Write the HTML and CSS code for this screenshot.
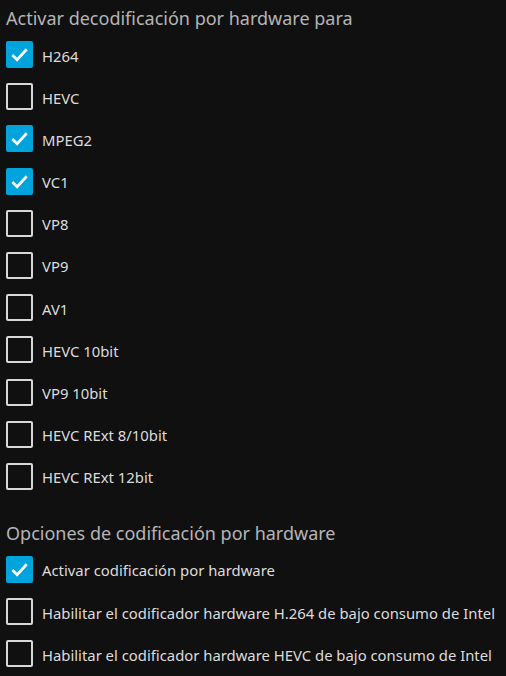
FILE: index.html
```html
<!DOCTYPE html>
<html lang="es">
<head>
    <meta charset="UTF-8">
    <meta name="viewport" content="width=device-width, initial-scale=1.0">
    <title>Transcodificación</title>
    <link rel="stylesheet" href="styles.css">
</head>
<body>
    <div class="settings">
        <h3 class="section-title">Activar decodificación por hardware para</h3>
        <div class="checkbox-list">
            <label class="checkbox-row checked"><span class="box"><svg viewBox="0 0 24 24"><path d="M4.5 12.5l5 5L19.5 6.5"/></svg></span><span class="label">H264</span></label>
            <label class="checkbox-row"><span class="box"></span><span class="label">HEVC</span></label>
            <label class="checkbox-row checked"><span class="box"><svg viewBox="0 0 24 24"><path d="M4.5 12.5l5 5L19.5 6.5"/></svg></span><span class="label">MPEG2</span></label>
            <label class="checkbox-row checked"><span class="box"><svg viewBox="0 0 24 24"><path d="M4.5 12.5l5 5L19.5 6.5"/></svg></span><span class="label">VC1</span></label>
            <label class="checkbox-row"><span class="box"></span><span class="label">VP8</span></label>
            <label class="checkbox-row"><span class="box"></span><span class="label">VP9</span></label>
            <label class="checkbox-row"><span class="box"></span><span class="label">AV1</span></label>
            <label class="checkbox-row"><span class="box"></span><span class="label">HEVC 10bit</span></label>
            <label class="checkbox-row"><span class="box"></span><span class="label">VP9 10bit</span></label>
            <label class="checkbox-row"><span class="box"></span><span class="label">HEVC RExt 8/10bit</span></label>
            <label class="checkbox-row"><span class="box"></span><span class="label">HEVC RExt 12bit</span></label>
        </div>

        <h3 class="section-title second">Opciones de codificación por hardware</h3>
        <div class="checkbox-list">
            <label class="checkbox-row checked"><span class="box"><svg viewBox="0 0 24 24"><path d="M4.5 12.5l5 5L19.5 6.5"/></svg></span><span class="label">Activar codificación por hardware</span></label>
            <label class="checkbox-row"><span class="box"></span><span class="label">Habilitar el codificador hardware H.264 de bajo consumo de Intel</span></label>
            <label class="checkbox-row"><span class="box"></span><span class="label">Habilitar el codificador hardware HEVC de bajo consumo de Intel</span></label>
        </div>
    </div>
</body>
</html>
```

FILE: styles.css
```css
* {
    margin: 0;
    padding: 0;
    box-sizing: border-box;
}

body {
    font-family: 'Noto Sans', 'Open Sans', sans-serif;
    background: #101010;
    color: rgba(255, 255, 255, 0.87);
    min-height: 100vh;
}

.settings {
    padding: 6px 6px 0 6px;
}

.section-title {
    font-size: 18px;
    line-height: 24px;
    font-weight: normal;
    color: #b5b5b5;
    margin-bottom: 11px;
}

.section-title.second {
    margin-top: 31px;
}

.checkbox-list {
    display: flex;
    flex-direction: column;
    gap: 15.2px;
}

.checkbox-row {
    display: flex;
    align-items: center;
    gap: 9px;
    height: 27px;
    cursor: pointer;
}

.box {
    width: 27px;
    height: 27px;
    flex-shrink: 0;
    border: 2px solid #d8d8d8;
    border-radius: 2px;
    display: flex;
    align-items: center;
    justify-content: center;
}

.checkbox-row.checked .box {
    background: #00a4dc;
    border-color: #00a4dc;
}

.box svg {
    width: 23px;
    height: 23px;
    fill: none;
    stroke: #fff;
    stroke-width: 2.8;
}

.label {
    font-size: 14.85px;
    color: #dcdcdc;
    padding-top: 2px;
    white-space: nowrap;
}
```
